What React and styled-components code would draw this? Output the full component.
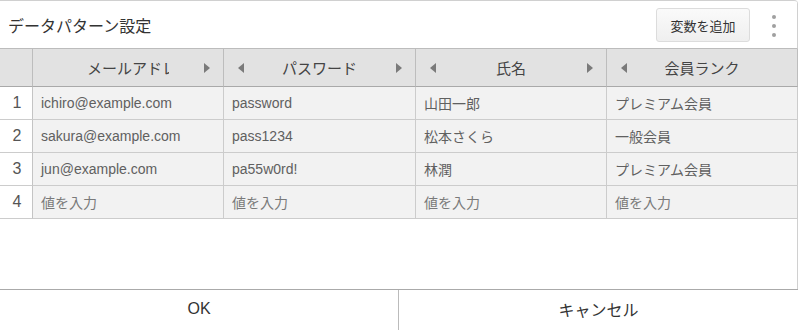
import React from "react";
import styled, { createGlobalStyle } from "styled-components";

const Global = createGlobalStyle`
  html, body { margin: 0; padding: 0; background: #fff; }
  body { font-family: "Liberation Sans", "Noto Sans CJK JP", sans-serif; }
  * { box-sizing: border-box; }
`;

const Dialog = styled.div`
  width: 798px;
  height: 330px;
  display: flex;
  flex-direction: column;
  border-top: 1px solid #d0d0d0;
  border-top-right-radius: 4px;
  background: #fff;
  overflow: hidden;
`;

const TitleBar = styled.div`
  height: 48px;
  display: flex;
  align-items: center;
  padding-left: 8px;
  border-bottom: 1px solid #bcbcbc;
  border-right: 1px solid #d0d0d0;
`;

const Title = styled.div`
  flex: 1;
  font-size: 16px;
  color: #333;
  padding-top: 1px;
`;

const AddButton = styled.button`
  width: 94px;
  height: 34px;
  margin-top: 1px;
  border: 1px solid #dcdcdc;
  border-radius: 3px;
  background: linear-gradient(#fafafa, #efefef);
  font-family: inherit;
  font-size: 13px;
  color: #333;
  padding: 0;
`;

const Kebab = styled.div`
  width: 47px;
  display: flex;
  flex-direction: column;
  align-items: center;
  gap: 5px;
  margin-top: 2px;
`;

const Dot = styled.span`
  width: 4px;
  height: 4px;
  border-radius: 50%;
  background: #a0a0a0;
`;

const Grid = styled.div`
  display: grid;
  grid-template-columns: 33px 191px 192px 191px 191px;
`;

const HeadCell = styled.div`
  height: 38px;
  background: #e2e2e2;
  border-right: 1px solid #bdbdbd;
  border-bottom: 1px solid #a9a9a9;
  display: flex;
  align-items: center;
  justify-content: center;
  position: relative;
`;

const HeadLabel = styled.div`
  width: 82px;
  overflow: hidden;
  white-space: nowrap;
  text-align: center;
  font-size: 15px;
  color: #444;
`;

const Arrow = styled.span`
  position: absolute;
  top: 50%;
  margin-top: -5px;
  width: 0;
  height: 0;
  border-top: 5px solid transparent;
  border-bottom: 5px solid transparent;
  ${(p) =>
    p.$dir === "left"
      ? `left: 14px; border-right: 6px solid #7a7a7a;`
      : `right: 13px; border-left: 6px solid #7a7a7a;`}
`;

const NumCell = styled.div`
  height: 33px;
  background: #fff;
  border-right: 1px solid #c4c4c4;
  border-bottom: 1px solid #cccccc;
  display: flex;
  align-items: center;
  justify-content: center;
  padding-left: 2px;
  font-size: 16px;
  color: #555;
`;

const Cell = styled.div`
  height: 33px;
  background: #f2f2f2;
  border-right: 1px solid #cccccc;
  border-bottom: 1px solid #cccccc;
  display: flex;
  align-items: center;
  padding-left: 8px;
  font-size: 14px;
  color: ${(p) => (p.$placeholder ? "#7a7a7a" : "#606060")};
  white-space: nowrap;
  overflow: hidden;
`;

const Body = styled.div`
  flex: 1;
  border-right: 1px solid #d0d0d0;
`;

const Footer = styled.div`
  height: 41px;
  display: grid;
  grid-template-columns: 398px 1fr;
  border-top: 1px solid #aaaaaa;
`;

const FooterButton = styled.button`
  border: none;
  border-left: ${(p) => (p.$divider ? "1px solid #bbbbbb" : "none")};
  background: #fff;
  font-family: inherit;
  font-size: 16px;
  color: #333;
  padding: 0 0 2px;
`;

const headers = ["メールアドレス", "パスワード", "氏名", "会員ランク"];
const rows = [
  ["ichiro@example.com", "password", "山田一郎", "プレミアム会員"],
  ["sakura@example.com", "pass1234", "松本さくら", "一般会員"],
  ["jun@example.com", "pa55w0rd!", "林潤", "プレミアム会員"],
];

export default function App() {
  return (
    <>
      <Global />
      <Dialog>
        <TitleBar>
          <Title>データパターン設定</Title>
          <AddButton>変数を追加</AddButton>
          <Kebab>
            <Dot />
            <Dot />
            <Dot />
          </Kebab>
        </TitleBar>
        <Grid>
          <HeadCell />
          {headers.map((h, i) => (
            <HeadCell key={h}>
              {i > 0 && <Arrow $dir="left" />}
              <HeadLabel>{h}</HeadLabel>
              {i < headers.length - 1 && <Arrow $dir="right" />}
            </HeadCell>
          ))}
          {rows.map((r, ri) => (
            <React.Fragment key={ri}>
              <NumCell>{ri + 1}</NumCell>
              {r.map((v, ci) => (
                <Cell key={ci}>{v}</Cell>
              ))}
            </React.Fragment>
          ))}
          <NumCell>4</NumCell>
          {headers.map((h) => (
            <Cell key={h} $placeholder>
              値を入力
            </Cell>
          ))}
        </Grid>
        <Body />
        <Footer>
          <FooterButton>OK</FooterButton>
          <FooterButton $divider>キャンセル</FooterButton>
        </Footer>
      </Dialog>
    </>
  );
}
